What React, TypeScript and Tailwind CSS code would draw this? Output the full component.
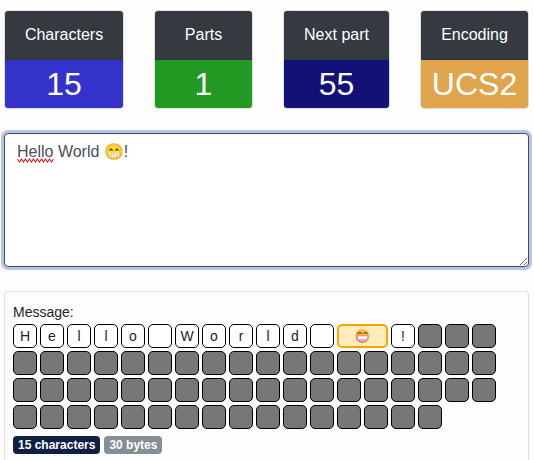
import React, { useState } from 'react';

const SINGLE_PART_UNITS = 70;

const stats = [
    { label: 'Characters', value: '15', color: 'bg-[#3333cc]' },
    { label: 'Parts', value: '1', color: 'bg-[#229922]' },
    { label: 'Next part', value: '55', color: 'bg-[#111177]' },
    { label: 'Encoding', value: 'UCS2', color: 'bg-[#e0a44c]' },
];

const GrinIcon: React.FC = () => (
    <svg viewBox="0 0 16 16" className="h-4 w-4" role="img" aria-label="😁">
        <defs>
            <linearGradient id="face" x1="0.7" y1="0" x2="0.3" y2="1">
                <stop offset="0" stopColor="#ffc83a" />
                <stop offset="0.55" stopColor="#f9ae38" />
                <stop offset="1" stopColor="#e8736a" />
            </linearGradient>
        </defs>
        <circle cx="7.5" cy="8" r="7" fill="url(#face)" />
        <path d="M2.8 5.6Q4.4 3.4 6.2 5.4M8.8 5.4Q10.6 3.4 12.2 5.6" fill="none" stroke="#59392f" strokeWidth="1.1" strokeLinecap="round" />
        <path d="M2.2 8H12.8Q12.8 13 7.5 13T2.2 8Z" fill="#fff" stroke="#c95f9c" strokeWidth="0.5" />
        <path d="M3 10.8H12Q10.6 12.8 7.5 12.8T3 10.8Z" fill="#e2a8ee" />
    </svg>
);

const SpellingMark: React.FC = () => (
    <svg viewBox="0 0 37 5" className="pointer-events-none absolute left-[13px] top-[25px] h-[5px] w-[37px]" aria-hidden="true">
        <path
            d="M0.5 1L2.5 4L4.5 1L6.5 4L8.5 1L10.5 4L12.5 1L14.5 4L16.5 1L18.5 4L20.5 1L22.5 4L24.5 1L26.5 4L28.5 1L30.5 4L32.5 1L34.5 4L36.5 1"
            fill="none"
            stroke="#f01818"
            strokeWidth="1.1"
        />
    </svg>
);

const App: React.FC = () => {
    const [message, setMessage] = useState('Hello World 😁!');

    const chars = Array.from(message);
    const emptyCount = Math.max(0, SINGLE_PART_UNITS - message.length);

    return (
        <div className="min-h-screen flex flex-col bg-[#fdfdfd] pt-[10px] pl-1 pr-[5px] font-['Liberation_Sans',Arial,sans-serif] text-[#212529]">
            <div className="grid grid-cols-[120fr_99fr_107fr_109fr] gap-[30px] text-center text-white">
                {stats.map((stat) => (
                    <div key={stat.label} className="min-w-0 overflow-hidden rounded border border-[#dfdfdf]">
                        <div className="border-b border-[#2e3338] bg-[#343a40] py-3 text-base leading-6">{stat.label}</div>
                        <div className={`text-[32px] leading-[48px] ${stat.color}`}>{stat.value}</div>
                    </div>
                ))}
            </div>

            <div className="relative mt-6">
                <textarea
                    aria-label="Message text"
                    value={message}
                    onChange={(e) => setMessage(e.target.value)}
                    className="block h-[134px] w-full resize-y rounded border border-[#2450a8] bg-white px-3 py-1.5 text-base leading-6 text-[#495057] outline-none ring-3 ring-[#bfc5cf]"
                />
                {message.startsWith('Hello ') && <SpellingMark />}
            </div>

            <div className="mt-6 flex-1 rounded-t border border-b-0 border-[#dfe0e6] px-2 pt-[10px]">
                <div className="text-sm leading-[21px]">Message:</div>
                <div className="mt-px flex flex-wrap gap-[3px] text-sm">
                    {chars.map((char, i) =>
                        char.length > 1 ? (
                            <span key={i} className="flex h-6 w-[51px] items-center justify-center rounded-[5px] border-2 border-[#ffa500] bg-[#ffedbb]">
                                <GrinIcon />
                            </span>
                        ) : (
                            <span key={i} className="flex h-6 w-6 items-center justify-center rounded-[5px] border border-black bg-white">
                                {char}
                            </span>
                        )
                    )}
                    {Array.from({ length: emptyCount }, (_, i) => (
                        <span key={`empty-${i}`} className="h-6 w-6 rounded-[5px] border border-black bg-[#777777]" />
                    ))}
                </div>
                <div className="mt-[7px] flex gap-1 text-xs font-bold leading-[18px] text-white">
                    <span className="rounded bg-[#0f2042] px-[5px]">{message.length} characters</span>
                    <span className="rounded bg-[#868e94] px-[5px]">{message.length * 2} bytes</span>
                </div>
            </div>
        </div>
    );
};

export default App;
